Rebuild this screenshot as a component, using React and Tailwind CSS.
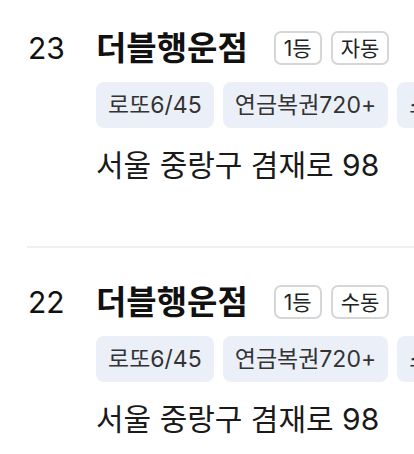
import React from 'react';

const items = [
  { no: 23, name: '더블행운점', rank: '1등', mode: '자동', addr: '서울 중랑구 겸재로 98', first: true },
  { no: 22, name: '더블행운점', rank: '1등', mode: '수동', addr: '서울 중랑구 겸재로 98' },
];

const games = ['로또6/45', '연금복권720+', '스피또1000', '스피또2000'];

function Badge({ children }) {
  return (
    <span className="h-[34px] px-[8px] flex items-center border-2 border-[#d6d6d6] rounded-[7px] text-[21px] text-[#222] leading-none">
      {children}
    </span>
  );
}

function StoreItem({ item }) {
  return (
    <div className={`${item.first ? 'pt-[31px]' : 'pt-[37px]'} pb-[62px] pl-[28px] flex`}>
      <div className="w-[68px] shrink-0 h-[34px] flex items-center text-[30px] text-[#111] leading-none">
        {item.no}
      </div>
      <div className="flex-1 min-w-0">
        <div className="h-[34px] flex items-center">
          <span className="text-[33px] font-bold text-[#111] leading-none mr-[26px] whitespace-nowrap">{item.name}</span>
          <div className="flex gap-[9px]">
            <Badge>{item.rank}</Badge>
            <Badge>{item.mode}</Badge>
          </div>
        </div>
        <div className="mt-[17px] flex gap-[9px] overflow-hidden whitespace-nowrap">
          {games.map((g) => (
            <span key={g} className="h-[46px] px-[12px] shrink-0 flex items-center bg-[#ebf0f8] rounded-[8px] text-[23px] text-[#333] leading-none">
              {g}
            </span>
          ))}
        </div>
        <div className="mt-[18px] h-[38px] flex items-center text-[30px] text-[#1a1a1a] leading-none whitespace-nowrap">
          {item.addr}
        </div>
      </div>
    </div>
  );
}

export default function App() {
  return (
    <div className="w-[414px] h-[454px] overflow-hidden bg-white" style={{ fontFamily: 'Inter, "Noto Sans CJK KR", sans-serif' }}>
      {items.map((item, i) => (
        <React.Fragment key={item.no}>
          {i > 0 && <div className="ml-[27px] h-[2px] bg-[#efefef]" />}
          <StoreItem item={item} />
        </React.Fragment>
      ))}
    </div>
  );
}
